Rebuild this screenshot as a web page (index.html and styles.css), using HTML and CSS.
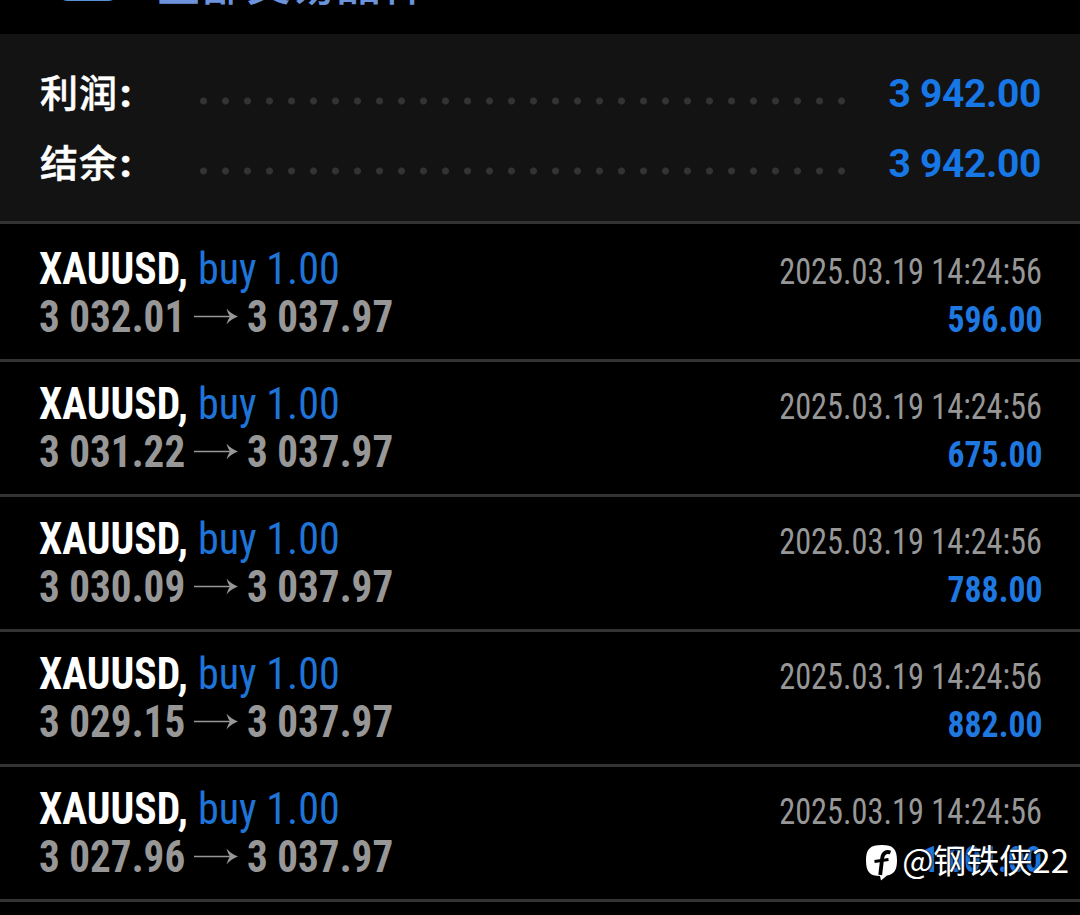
FILE: index.html
```html
<!DOCTYPE html>
<html lang="zh-CN">
<head>
    <meta charset="UTF-8">
    <meta name="viewport" content="width=device-width, initial-scale=1.0">
    <title>历史</title>
    <link rel="stylesheet" href="styles.css">
</head>
<body>
    <!-- arrow between open and close price -->
    <svg class="defs" width="0" height="0">
        <symbol id="arrow" viewBox="0 0 44 18">
            <path d="M0 8.5h38" fill="none" stroke="currentColor" stroke-width="1.5"/>
            <path d="M32.5 0.5Q37 6 44 8.500Q37 11 32.500 16.500Q33.500 12 36 8.500Q33.500 5 32.500 0.500Z" fill="currentColor"/>
        </symbol>
    </svg>

    <header class="top-bar">
        <span class="top-icon"></span>
        <h1>全部交易品种</h1>
    </header>

    <section class="summary">
        <div class="summary-row">
            <span class="label">利润<i>:</i></span>
            <span class="dots"></span>
            <span class="total">3 942.00</span>
        </div>
        <div class="summary-row">
            <span class="label">结余<i>:</i></span>
            <span class="dots"></span>
            <span class="total">3 942.00</span>
        </div>
    </section>

    <main class="deals">
        <div class="deal">
            <div class="line">
                <div class="title"><span class="symbol">XAUUSD,</span><span class="side">buy 1.00</span></div>
                <div class="time">2025.03.19 14:24:56</div>
            </div>
            <div class="line">
                <div class="prices"><span class="price">3 032.01</span><svg class="arrow"><use href="#arrow"/></svg><span class="price">3 037.97</span></div>
                <div class="profit">596.00</div>
            </div>
        </div>

        <div class="deal">
            <div class="line">
                <div class="title"><span class="symbol">XAUUSD,</span><span class="side">buy 1.00</span></div>
                <div class="time">2025.03.19 14:24:56</div>
            </div>
            <div class="line">
                <div class="prices"><span class="price">3 031.22</span><svg class="arrow"><use href="#arrow"/></svg><span class="price">3 037.97</span></div>
                <div class="profit">675.00</div>
            </div>
        </div>

        <div class="deal">
            <div class="line">
                <div class="title"><span class="symbol">XAUUSD,</span><span class="side">buy 1.00</span></div>
                <div class="time">2025.03.19 14:24:56</div>
            </div>
            <div class="line">
                <div class="prices"><span class="price">3 030.09</span><svg class="arrow"><use href="#arrow"/></svg><span class="price">3 037.97</span></div>
                <div class="profit">788.00</div>
            </div>
        </div>

        <div class="deal">
            <div class="line">
                <div class="title"><span class="symbol">XAUUSD,</span><span class="side">buy 1.00</span></div>
                <div class="time">2025.03.19 14:24:56</div>
            </div>
            <div class="line">
                <div class="prices"><span class="price">3 029.15</span><svg class="arrow"><use href="#arrow"/></svg><span class="price">3 037.97</span></div>
                <div class="profit">882.00</div>
            </div>
        </div>

        <div class="deal">
            <div class="line">
                <div class="title"><span class="symbol">XAUUSD,</span><span class="side">buy 1.00</span></div>
                <div class="time">2025.03.19 14:24:56</div>
            </div>
            <div class="line">
                <div class="prices"><span class="price">3 027.96</span><svg class="arrow"><use href="#arrow"/></svg><span class="price">3 037.97</span></div>
                <div class="profit">1 001.00</div>
            </div>
        </div>
    </main>

    <div class="watermark">
        <svg width="32" height="36" viewBox="0 0 32 36">
            <path d="M16 0C27 0 31 4 31 15.500C31 25 28 29.500 21 30.500L15 35.500L14 31C4 31 0 27 0 15.500C0 4 4 0 16 0Z" fill="#fff"/>
            <path d="M24.500 7.500C20 6 17 8 16.200 13L14.200 30" fill="none" stroke="#000" stroke-width="3.800"/>
            <path d="M8.500 16.500L22.500 14.500" fill="none" stroke="#000" stroke-width="3"/>
        </svg>
        <span>@钢铁侠22</span>
    </div>
</body>
</html>
```
FILE: styles.css
```css
* {
    margin: 0;
    padding: 0;
    box-sizing: border-box;
}

body {
    height: 915px;
    overflow: hidden;
    background: #000;
    color: #fff;
    font-family: Roboto, "Noto Sans CJK SC", sans-serif;
}

.defs {
    position: absolute;
}

/* Top bar, scrolled almost out of view */
.top-bar {
    height: 34px;
    display: flex;
    align-items: flex-start;
    padding-left: 56px;
}

.top-icon {
    width: 64px;
    height: 40px;
    margin-top: -39px;
    margin-right: 36px;
    border-radius: 12px;
    background: #5b8fd8;
}

.top-bar h1 {
    margin-top: -37px;
    font-size: 45px;
    line-height: 46px;
    font-weight: 500;
    color: #6c93dc;
}

/* Summary */
.summary {
    height: 190px;
    padding: 25px 39px 0 40px;
    background: #131313;
    border-bottom: 3px solid #333;
}

.summary-row {
    height: 70px;
    display: flex;
    align-items: center;
}

.label {
    width: 153px;
    font-size: 38px;
    line-height: 70px;
    font-weight: 500;
    letter-spacing: 1px;
    -webkit-text-stroke: 0.5px #fff;
}

.label i {
    margin-left: 2px;
    font-style: normal;
    font-weight: 900;
}

.dots {
    width: 660px;
    height: 8px;
    margin-top: 13px;
    background: radial-gradient(circle at 10.5px 4px, #333 3px, transparent 4px) 0 0 / 22px 8px repeat-x;
}

.total {
    flex: 1;
    text-align: right;
    font-size: 39px;
    line-height: 70px;
    font-weight: 700;
    letter-spacing: -0.35px;
    color: #1877e6;
}

/* Deals */
.deal {
    height: 135px;
    padding: 18px 38px 0 39px;
    border-bottom: 3px solid #333;
    font-stretch: 75%;
}

.deal:first-child {
    height: 138px;
    padding-top: 21px;
}

.line {
    height: 48px;
    display: flex;
    justify-content: space-between;
    align-items: baseline;
    line-height: 48px;
    white-space: nowrap;
}

.title,
.prices {
    display: flex;
    font-size: 44px;
    font-weight: 700;
}

/* Figures are squeezed a bit more than the condensed face */
.symbol,
.side,
.price {
    transform: scaleX(0.945);
    transform-origin: left;
}

.symbol {
    width: 159px;
}

.side {
    font-weight: 400;
    color: #1f74d8;
    transform: scaleX(0.957);
}

.prices {
    color: #979797;
}

.price {
    width: 155px;
    transform: scaleX(0.935);
}

.arrow {
    width: 44px;
    height: 18px;
    margin: 15px 9px 0 0;
}

.time {
    font-size: 37px;
    font-weight: 450;
    color: #979797;
    transform: scaleX(0.873);
    transform-origin: right;
}

.profit {
    font-size: 36px;
    font-weight: 700;
    color: #1f78e0;
    transform: scaleX(0.935);
    transform-origin: right;
}

/* Uploader name over the last deal */
.watermark {
    position: absolute;
    right: 11px;
    bottom: 30px;
    display: flex;
    align-items: center;
    gap: 4px;
    font-family: "Noto Sans CJK SC", sans-serif;
    font-size: 33px;
    line-height: 44px;
    padding-bottom: 4px;
    text-shadow: 0 0 2px #000, 0 1px 2px #000;
}

.watermark svg {
    margin-top: 9px;
}
```
